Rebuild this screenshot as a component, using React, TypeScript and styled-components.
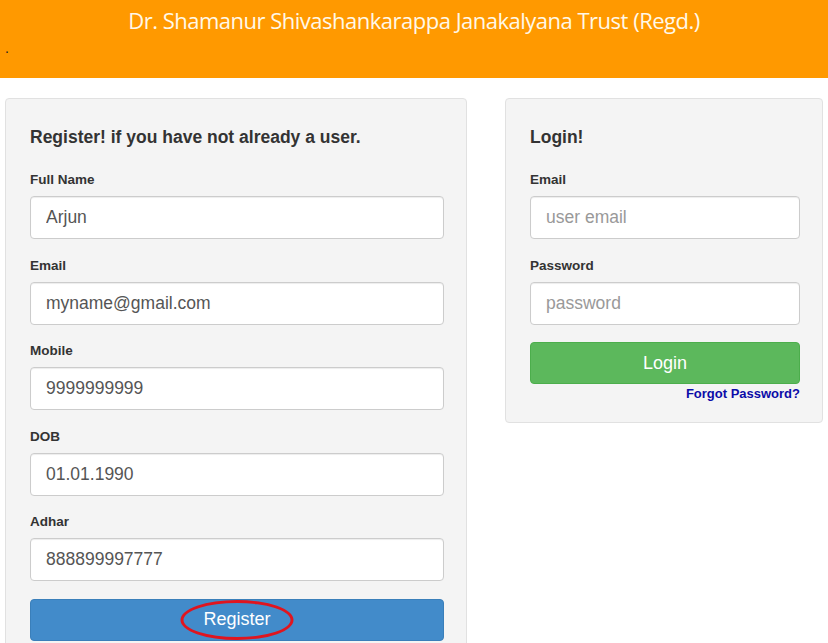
import React from "react";
import styled, { createGlobalStyle } from "styled-components";

const Global = createGlobalStyle`
  html, body { margin: 0; padding: 0; background: #ffffff; }
  body { font-family: "Liberation Sans", Arial, sans-serif; color: #333; }
  * { box-sizing: border-box; }
`;

const Header = styled.header`
  height: 78px;
  background: #ff9900;
  position: relative;
  padding-top: 6px;
`;

const Title = styled.h1`
  margin: 0;
  text-align: center;
  font-family: "Open Sans", "Noto Sans", sans-serif;
  font-weight: 400;
  font-size: 22px;
  line-height: 28px;
  letter-spacing: -0.5px;
  color: #fff8e8;
`;

const Dot = styled.div`
  margin: 8px 0 0 5px;
  font-size: 14px;
  line-height: 12px;
  color: #222;
`;

const Main = styled.main`
  display: flex;
  align-items: flex-start;
  gap: 38px;
  padding: 20px 0 0 5px;
`;

const Panel = styled.section<{ $w: number }>`
  width: ${(p) => p.$w}px;
  flex: none;
  background: #f4f4f4;
  border: 1px solid #e1e1e1;
  border-radius: 4px;
  padding: 24px 22px 20px 24px;
`;

const PanelTitle = styled.h3`
  margin: 2px 0 22px;
  font-size: 17.5px;
  line-height: 24px;
  font-weight: 700;
  color: #333;
`;

const Group = styled.div`
  margin-bottom: 17.5px;
`;

const Label = styled.label`
  display: block;
  font-size: 13.5px;
  line-height: 18px;
  font-weight: 700;
  color: #333;
  margin-bottom: 7px;
`;

const Input = styled.input`
  display: block;
  width: 100%;
  height: 43px;
  padding: 0 15px;
  font-family: "Liberation Sans", Arial, sans-serif;
  font-size: 17.5px;
  color: #555;
  background: #fff;
  border: 1px solid #cccccc;
  border-radius: 4px;
  box-shadow: inset 0 1px 1px rgba(0, 0, 0, 0.075);
  outline: none;
  &::placeholder { color: #999; }
`;

const Button = styled.button<{ $variant: "primary" | "success" }>`
  position: relative;
  display: block;
  width: 100%;
  height: 42px;
  margin-top: 1.5px;
  border: 1px solid ${(p) => (p.$variant === "primary" ? "#3a7fba" : "#4cae4c")};
  border-radius: 4px;
  background: ${(p) => (p.$variant === "primary" ? "#428bca" : "#5cb85c")};
  color: #fff;
  font-family: "Liberation Sans", Arial, sans-serif;
  font-size: 18px;
  cursor: pointer;
`;

const Circled = styled.span`
  position: relative;
  display: inline-block;
`;

const Ellipse = styled.span`
  position: absolute;
  left: 50%;
  top: 50%;
  width: 113px;
  height: 40px;
  transform: translate(-50%, -50%);
  border: 3px solid #e0151f;
  border-radius: 50%;
  pointer-events: none;
`;

const LinkRow = styled.div`
  text-align: right;
  line-height: 16px;
  margin-top: 1px;
`;

const Link = styled.a`
  font-size: 13px;
  font-weight: 700;
  color: #0b0ba8;
  text-decoration: none;
`;

export default function App() {
  return (
    <>
      <Global />
      <Header>
        <Title>Dr. Shamanur Shivashankarappa Janakalyana Trust (Regd.)</Title>
        <Dot>.</Dot>
      </Header>
      <Main>
        <Panel $w={462}>
          <PanelTitle>Register! if you have not already a user.</PanelTitle>
          <Group>
            <Label>Full Name</Label>
            <Input defaultValue="Arjun" />
          </Group>
          <Group>
            <Label>Email</Label>
            <Input defaultValue="myname@gmail.com" />
          </Group>
          <Group>
            <Label>Mobile</Label>
            <Input defaultValue="9999999999" />
          </Group>
          <Group>
            <Label>DOB</Label>
            <Input defaultValue="01.01.1990" />
          </Group>
          <Group>
            <Label>Adhar</Label>
            <Input defaultValue="888899997777" />
          </Group>
          <Button $variant="primary">
            <Circled>
              Register
              <Ellipse />
            </Circled>
          </Button>
        </Panel>
        <Panel $w={318}>
          <PanelTitle>Login!</PanelTitle>
          <Group>
            <Label>Email</Label>
            <Input placeholder="user email" />
          </Group>
          <Group>
            <Label>Password</Label>
            <Input type="password" placeholder="password" />
          </Group>
          <Button $variant="success">Login</Button>
          <LinkRow>
            <Link href="#">Forgot Password?</Link>
          </LinkRow>
        </Panel>
      </Main>
    </>
  );
}
